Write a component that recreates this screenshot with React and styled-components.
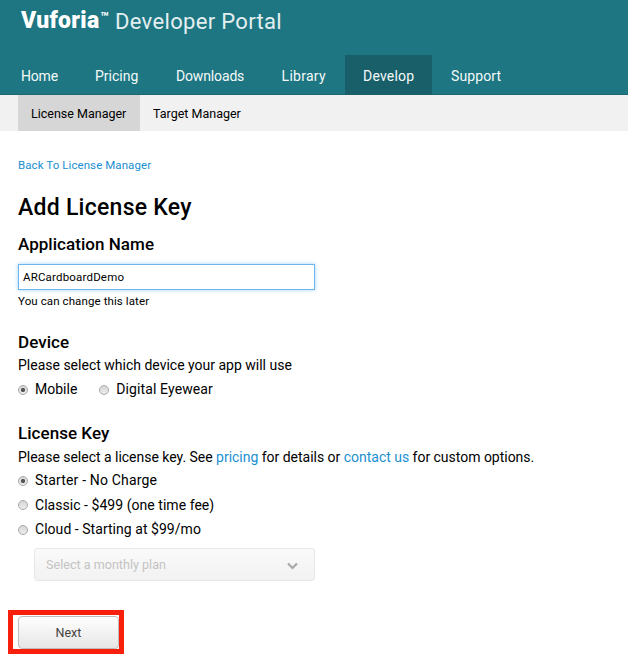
import React, { useState } from 'react';
import styled, { createGlobalStyle } from 'styled-components';

const GlobalStyle = createGlobalStyle`
  * { box-sizing: border-box; }
  body {
    margin: 0;
    background: #fff;
    color: #000;
    font: 400 14px/20px Roboto, "Liberation Sans", sans-serif;
    white-space: nowrap;
  }
  h1, h2, p { margin: 0; }
  a { text-decoration: none; }
`;

const Page = styled.div`
  height: 667px;
  overflow: hidden;
`;

const Header = styled.header`
  height: 95px;
  display: flex;
  flex-direction: column;
  justify-content: space-between;
  background: #1d7682;
  box-shadow: inset 0 -1px #1a6873;
`;

const Brand = styled.div`
  display: flex;
  padding: 7px 0 0 21px;
  color: #fff;
  font-size: 22px;
  line-height: 28px;
`;

const BrandName = styled.span`
  width: 79px;
  font-size: 23px;
  font-weight: 900;
  letter-spacing: 0.3px;
`;

const Trademark = styled.sup`
  width: 15px;
  font-size: 14px;
  font-weight: 700;
  line-height: 21px;
  vertical-align: baseline;
`;

const BrandSuffix = styled.span`
  color: #e4eff0;
  line-height: 29px;
  letter-spacing: 0.33px;
`;

const Nav = styled.nav`
  display: flex;
  height: 40px;
  padding-left: 3px;
`;

const NavItem = styled.a`
  width: ${(p) => p.$width}px;
  padding-left: ${(p) => p.$inset || 18}px;
  line-height: 42px;
  color: #f4f9f9;
  letter-spacing: ${(p) => p.$track || 0}px;
  background: ${(p) => (p.$active ? '#195f69' : 'transparent')};
`;

const SubNav = styled.nav`
  display: flex;
  height: 36px;
  padding-left: 18px;
  background: #f1f1f1;
`;

const SubNavItem = styled.a`
  width: 122px;
  padding-left: 13px;
  font-size: 12.5px;
  line-height: 37px;
  color: #000;
  background: ${(p) => (p.$active ? '#d6d6d6' : 'transparent')};
`;

const Form = styled.main`
  display: flex;
  flex-direction: column;
  align-items: flex-start;
  padding: 24px 18px 0;
`;

const Link = styled.a`
  color: #1a8fd1;
`;

const BackLink = styled(Link)`
  font-size: 11.5px;
  letter-spacing: 0.08px;
`;

const Title = styled.h1`
  margin-top: 18px;
  font-size: 23px;
  font-weight: 500;
  line-height: 30px;
  letter-spacing: 0.26px;
`;

const Heading = styled.h2`
  margin-top: ${(p) => p.$gap}px;
  font-size: 17px;
  font-weight: 500;
  line-height: 20px;
  letter-spacing: 0.04px;
`;

const NameInput = styled.input`
  width: 297px;
  height: 26px;
  margin-top: 10px;
  padding: 0 4px;
  border: 1px solid #6db5ee;
  outline: none;
  box-shadow: 0 0 4px rgba(100, 180, 240, 0.6);
  font: 400 11.5px Roboto, sans-serif;
  letter-spacing: 0.18px;
  color: #000;
`;

const Hint = styled.p`
  margin-top: 3px;
  font-size: 11.5px;
  line-height: 16px;
  letter-spacing: 0.1px;
`;

const Copy = styled.p`
  margin-top: ${(p) => p.$gap}px;
  letter-spacing: ${(p) => p.$track || 0}px;
`;

const DeviceOptions = styled.div`
  display: flex;
  gap: 22px;
  margin-top: 4px;
`;

const LicenseOptions = styled.div`
  display: grid;
  gap: 4.5px;
  margin-top: 3px;
`;

const Option = styled.label`
  display: flex;
  align-items: center;
  gap: 7px;
  letter-spacing: ${(p) => p.$track || 0}px;
`;

const Radio = styled.input`
  appearance: none;
  width: 10px;
  height: 10px;
  margin: 1px 0 0;
  border: 1px solid #a9a9a9;
  border-radius: 50%;
  background: linear-gradient(#d6d6d6, #ececec);
  &:checked {
    background: radial-gradient(circle, #555 0 1.7px, transparent 2.5px), linear-gradient(#d6d6d6, #ececec);
  }
`;

const PlanSelect = styled.div`
  display: flex;
  align-items: center;
  justify-content: space-between;
  width: 281px;
  height: 33px;
  margin: 9px 0 0 16px;
  padding: 0 16px 0 11px;
  border: 1px solid #e7e7e7;
  border-radius: 3px;
  background: linear-gradient(#fafafa, #f2f2f2);
  color: #c3c3c3;
  font-size: 12.5px;
  letter-spacing: 0.04px;
`;

const Chevron = styled.svg`
  width: 11px;
  height: 8px;
  margin-top: 2px;
  fill: none;
  stroke: #a9a9a9;
  stroke-width: 2.2;
`;

const Highlight = styled.div`
  display: flex;
  width: 116px;
  height: 44px;
  margin: 29px 0 0 -10px;
  padding: 1px 0 0 5px;
  border: 5px solid #f8200c;
`;

const NextButton = styled.button`
  width: 101px;
  height: 33px;
  padding: 0;
  border: 1px solid #bdbdbd;
  border-radius: 4px;
  background: linear-gradient(#fff, #e6e6e6);
  color: #444;
  font: 400 12.5px Roboto, sans-serif;
`;

const navItems = [
  { label: 'Home', width: 74, track: -0.2 },
  { label: 'Pricing', width: 81 },
  { label: 'Downloads', width: 105, track: -0.15 },
  { label: 'Library', width: 82, track: 0.27, inset: 18.6 },
  { label: 'Develop', width: 87, track: 0.19, active: true },
  { label: 'Support', width: 90, track: 0.1, inset: 19 },
];

const licenses = [
  { label: 'Starter - No Charge', track: 0.17 },
  { label: 'Classic - $499 (one time fee)', track: 0.04 },
  { label: 'Cloud - Starting at $99/mo', track: 0.04 },
];

export default function App() {
  const [name, setName] = useState('ARCardboardDemo');
  return (
    <Page>
      <GlobalStyle />
      <Header>
        <Brand>
          <BrandName>Vuforia</BrandName>
          <Trademark>™</Trademark>
          <BrandSuffix>Developer Portal</BrandSuffix>
        </Brand>
        <Nav>
          {navItems.map((n) => (
            <NavItem key={n.label} href="#" $width={n.width} $inset={n.inset} $track={n.track} $active={n.active}>
              {n.label}
            </NavItem>
          ))}
        </Nav>
      </Header>
      <SubNav>
        <SubNavItem href="#" $active>License Manager</SubNavItem>
        <SubNavItem href="#">Target Manager</SubNavItem>
      </SubNav>
      <Form>
        <BackLink href="#">Back To License Manager</BackLink>
        <Title>Add License Key</Title>
        <Heading $gap={11}>Application Name</Heading>
        <NameInput value={name} onChange={(e) => setName(e.target.value)} />
        <Hint>You can change this later</Hint>
        <Heading $gap={23}>Device</Heading>
        <Copy $gap={3}>Please select which device your app will use</Copy>
        <DeviceOptions>
          <Option><Radio type="radio" name="device" defaultChecked />Mobile</Option>
          <Option $track={0.11}><Radio type="radio" name="device" />Digital Eyewear</Option>
        </DeviceOptions>
        <Heading $gap={24}>License Key</Heading>
        <Copy $gap={4} $track={-0.02}>
          Please select a license key. See <Link href="#">pricing</Link> for details or{' '}
          <Link href="#">contact us</Link> for custom options.
        </Copy>
        <LicenseOptions>
          {licenses.map((l, i) => (
            <Option key={l.label} $track={l.track}>
              <Radio type="radio" name="license" defaultChecked={i === 0} />
              {l.label}
            </Option>
          ))}
        </LicenseOptions>
        <PlanSelect>
          Select a monthly plan
          <Chevron viewBox="0 0 11 8"><path d="M1 1.5 5.5 6 10 1.5" /></Chevron>
        </PlanSelect>
        <Highlight><NextButton>Next</NextButton></Highlight>
      </Form>
    </Page>
  );
}
